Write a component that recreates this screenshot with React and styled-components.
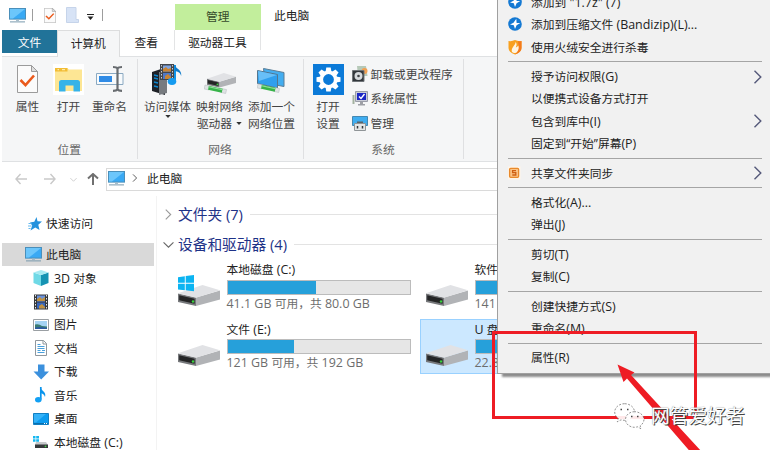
import * as React from 'react'
import styled, {createGlobalStyle, css} from 'styled-components';

const sideItems = [
    {icon : "cube", name : "3D 对象"},
    {icon : "video", name : "视频"},
    {icon : "picture", name : "图片"},
    {icon : "doc", name : "文档"},
    {icon : "download", name : "下载"},
    {icon : "music", name : "音乐"},
    {icon : "desktop", name : "桌面"},
    {icon : "disk", name : "本地磁盘 (C:)"},
];

const drives = [
    {name : "本地磁盘 (C:)", info : "41.1 GB 可用，共 80.0 GB", used : 48.6, system : true},
    {name : "软件 (D:)", info : "141 GB 可用，共 192 GB", used : 27},
    {name : "文件 (E:)", info : "121 GB 可用，共 192 GB", used : 36.7},
    {name : "U 盘 (F:)", info : "22.8 GB 可用，共 28.8 GB", used : 21, selected : true},
];

const menuGroups = [
    [
        {name : "添加到 \"1.7z\" (7)", icon : "bandizip"},
        {name : "添加到压缩文件 (Bandizip)(L)...", icon : "bandizip"},
        {name : "使用火绒安全进行杀毒", icon : "shield"},
    ],
    [
        {name : "授予访问权限(G)", more : true},
        {name : "以便携式设备方式打开"},
        {name : "包含到库中(I)", more : true},
        {name : "固定到“开始”屏幕(P)"},
    ],
    [{name : "共享文件夹同步", icon : "sync", more : true}],
    [{name : "格式化(A)..."}, {name : "弹出(J)"}],
    [{name : "剪切(T)"}, {name : "复制(C)"}],
    [{name : "创建快捷方式(S)"}, {name : "重命名(M)"}],
    [{name : "属性(R)"}],
];

// latin runs are set a little larger than the chinese text around them
const Label = ({text}) => text.split(/([ -~]+)/).map((part, i) => (
    i % 2 ? <Latin key={i}>{part}</Latin> : part
));

const Monitor = ({w, h}) => (
    <svg width={w} height={h} viewBox="0 0 17 15" preserveAspectRatio="none">
        <rect x="0.5" y="0.5" width="16" height="10.6" fill="#39a9f4" stroke="#4a8fba"/>
        <path d="M1 1h15L4 10.6H1z" fill="#6cc6fb"/>
        <path d="M7 11.5h3v1.4H7z" fill="#9fb6c4"/>
        <path d="M1 13.9h15" stroke="#7899ad" strokeWidth="1"/>
    </svg>
);

const CheckPage = ({w, h}) => (
    <svg width={w} height={h} viewBox="0 0 21 28" preserveAspectRatio="none">
        <path d="M0.5 0.5h14l6 6v21h-20z" fill="#fbfbfb" stroke="#9b9b9b"/>
        <path d="M14.5 0.5v6h6z" fill="#dedede" stroke="#9b9b9b"/>
        <path d="M3.5 15l5 5.2L17 10.5" fill="none" stroke="#ea5a1c" strokeWidth="2.6"/>
    </svg>
);

const OpenFolder = () => (
    <svg width="31" height="31" viewBox="0 0 31 31">
        <path d="M0 0h31v31H0z" fill="#fff"/>
        <path d="M2 4h12l2 1.5h13V27H2z" fill="#fde694"/>
        <path d="M2 4h12.5v3.500H2z" fill="#f2bd34"/>
        <path d="M4.500 5.700h1.500M9 5.700h3" stroke="#fff4c8"/>
        <path d="M6 18.500q0-2.500 2.500-2.500h16q2.500 0 2.500 2.500V27.500h-6.500v-6h-8v6H6z" fill="#36b3e8"/>
    </svg>
);

const Rename = () => (
    <svg width="28" height="28" viewBox="0 0 28 28">
        <path d="M0.500 8.500h26.500v11H0.500z" fill="#f7fafc" stroke="#8aa9c2"/>
        <path d="M3 11h13v6H3z" fill="#2f8be6"/>
        <path d="M17 2q3.500 0 4.500 1.500Q22.500 2 26 2M21.500 3v21.500M17 25.800q3.500 0 4.500-1.500 1 1.500 4.500 1.500" fill="none" stroke="#686c70" strokeWidth="2.200"/>
    </svg>
);

const MediaServer = () => (
    <svg width="31" height="31" viewBox="0 0 31 31">
        <path d="M0 8l9-3 4 2v24L0 27z" fill="#1d2127"/>
        <path d="M7 8h8v21l-8 2z" fill="#777b80"/>
        <path d="M2 11l4 1M2 14l4 1M2 18l4 1M2 22l4 1" stroke="#0c86cf" strokeWidth="1.300"/>
        <path d="M8 0h14v16H8z" fill="#42464c"/>
        <path d="M11 1.500h8v6h-8z" fill="#7ea4e0"/>
        <path d="M11 9h8v6h-8z" fill="#4e78c7"/>
        <path d="M11 5l3-2 2 2 3-1v3.500h-8zM13 12l3-2 3 3v2h-6z" fill="#c98432"/>
        <path d="M9.500 1v14M20.500 1v14" stroke="#c9cdd1" strokeDasharray="1.500 1.500"/>
        <path d="M23 1v15.500" stroke="#0f93e9" strokeWidth="2"/>
        <ellipse cx="20" cy="17.500" rx="4.300" ry="3.400" fill="#159bf0"/>
        <path d="M22.200 0c1 5 8 5 7 12-1-4-4-4.500-6-5z" fill="#0f7ccb"/>
    </svg>
);

const NetCable = ({x, y}) => (
    <g transform={`translate(${x} ${y}) rotate(12)`}>
        <path d="M0 0h5v4H0zM17 0h5v4h-5z" fill="#dfe3e4" stroke="#b4babd" strokeWidth="0.500"/>
        <path d="M4 0h14v4H4z" fill="#37b34a"/>
        <path d="M4 1h14" stroke="#8fe09b"/>
    </g>
);

const DriveBody = () => (
    <g>
        <path d="M18 12.500L42 5.500v9L18 21z" fill="#b1b3b6"/>
        <path d="M0 8.500L18 12.500V21L0 17z" fill="#77797c"/>
        <path d="M1.200 10.300l15.400 3.500v5L1.200 15.300z" fill="#242526"/>
        <path d="M0 8.300l24.500-8.300L42 5.300 18 12.800z" fill="#e1e2e5"/>
        <circle cx="15" cy="16.500" r="1.200" fill="#3bd13f"/>
    </g>
);

const WinLogo = () => (
    <path d="M0 2.200l6.800-1v6.600H0zM7.700 1L16 0v7.800H7.700zM0 8.700h6.800v6.600L0 14.400zM7.700 8.700H16v7.600l-8.300-1z" fill="#0bb4f2"/>
);

const NetDrive = () => (
    <svg width="32" height="22" viewBox="0 0 32 22">
        <g transform="translate(3 0) scale(0.690)"><DriveBody/></g>
        <NetCable x="1" y="12"/>
    </svg>
);

const NetPlace = () => (
    <svg width="29" height="26" viewBox="0 0 29 26">
        <path d="M6.500 0.500L27 4.500v14L8 15z" fill="#43adf0" stroke="#5a7d96"/>
        <path d="M0.500 2.500L20.500 6.500v13.500L0.500 15.500z" fill="#2f9fee" stroke="#54768e"/>
        <path d="M1 3l19 4L2 13z" fill="#68bff7"/>
        <NetCable x="1" y="16"/>
    </svg>
);

const gearTeeth = [0, 45, 90, 135, 180, 225, 270, 315];
const Gear = () => (
    <svg width="31" height="31" viewBox="0 0 31 31">
        <path d="M0 0h31v31H0z" fill="#0b7ad8"/>
        {gearTeeth.map((deg) => <path key={deg} d="M13.300 3.500h4.400l0.800 4.500h-6z" fill="#fff" transform={`rotate(${deg} 15.500 15.500)`}/>)}
        <circle cx="15.500" cy="15.500" r="7.200" fill="none" stroke="#fff" strokeWidth="3.600"/>
    </svg>
);

const Programs = () => (
    <svg width="16" height="16" viewBox="0 0 16 16">
        <path d="M5 0h9l1.500 10H6z" fill="#b6c9b8"/>
        <circle cx="12.500" cy="5" r="3" fill="#f2a052"/>
        <path d="M0.500 4.500h11.500v11H0.500z" fill="#32373b" stroke="#6f7478"/>
        <circle cx="6.500" cy="10" r="4" fill="#d5d9dc"/>
        <circle cx="6.500" cy="10" r="1.300" fill="#3c4043"/>
    </svg>
);

const SystemProps = () => (
    <svg width="16" height="15" viewBox="0 0 16 15">
        <path d="M0.500 4h2v9h-2z" fill="#a4b3a0"/>
        <path d="M3.500 0.500h12v10h-12z" fill="#c9ccd6" stroke="#9a9da8"/>
        <path d="M5 2h9v7H5z" fill="#1b26c4"/>
        <path d="M7 5.500l2 2 3.500-4.500" stroke="#fff" fill="none" strokeWidth="1.400"/>
        <path d="M8 11h3v2H8zM6 13h7v1.500H6z" fill="#9ea0a6"/>
    </svg>
);

const Manage = () => (
    <svg width="16" height="15" viewBox="0 0 16 15">
        <path d="M0.500 0.500h15v9h-15z" fill="#3fadf0" stroke="#4588b1"/>
        <path d="M5 5.500h6v2H5z" fill="#5d6266"/>
        <path d="M2.500 7.500h11v7h-11z" fill="#e4e6e7" stroke="#8f9497"/>
        <path d="M5.500 10v2.500M10.500 10v2.500" stroke="#33373a" strokeWidth="1.500"/>
    </svg>
);

const sideIcons = {
    cube : <g>
        <path d="M0.500 2.500L8 5v11L0.500 13z" fill="#6fd9e6"/>
        <path d="M8 5l7.500-2.500V13L8 16z" fill="#1593b3"/>
        <path d="M0.500 2.500L8 0l7.500 2.500L8 5z" fill="#a7eaf2"/>
    </g>,
    video : <g>
        <path d="M1 0.500h14v15H1z" fill="#36393c"/>
        <path d="M4 1.500h8v6H4z" fill="#6a92dc"/>
        <path d="M4 8.500h8v6H4z" fill="#3867bd"/>
        <path d="M4 5l3-2 2 2 3-2v4H4zM6 12l3-2 3 3v1.500H6z" fill="#c09241"/>
        <path d="M2.500 1v14M13.500 1v14" stroke="#e7e9ea" strokeDasharray="1.500 1.500"/>
    </g>,
    picture : <g>
        <path d="M0.500 2.500h15v11h-15z" fill="#fff" stroke="#9a9fa3"/>
        <path d="M2 4h12v8H2z" fill="#a4d3f3"/>
        <path d="M2 7.500q4-1 7 1.500l5 0.500V12H2z" fill="#3b7c72"/>
        <path d="M2 10.500q6-1 12 0.500v1H2z" fill="#2b5aa0"/>
    </g>,
    doc : <g>
        <path d="M2.500 0.500h8l3 3v12h-11z" fill="#fff" stroke="#8f979d"/>
        <path d="M4.500 4.500h3M4.500 6.500h7M4.500 8.500h7M4.500 10.500h3M4.500 12.500h7M9 10.500h3" stroke="#4aa0dc"/>
        <path d="M10 0.500v3.500h3.500" fill="none" stroke="#8f979d"/>
    </g>,
    download : <path d="M5 0.500h6.500v7H16L8.200 15.500 0.500 7.500H5z" fill="#3b90dd"/>,
    music : <g>
        <path d="M7.800 0v12.500" stroke="#0a94ec" strokeWidth="1.700"/>
        <ellipse cx="5.300" cy="12.800" rx="3.300" ry="2.700" fill="#12a0f4"/>
        <path d="M7.300 0c0.700 4 6.500 4.500 4.700 10C11.500 7.500 9.500 6.500 7.500 6z" fill="#0a94ec"/>
    </g>,
    desktop : <g>
        <path d="M0.500 2.500h15v11h-15z" fill="#0c9cf0" stroke="#127fc2"/>
        <path d="M1 3h12L3 11.500H1z" fill="#35b2f8"/>
        <path d="M1 12.500h14" stroke="#0a6fae"/>
        <path d="M11 12.500h1M13 12.500h1" stroke="#fff"/>
    </g>,
    disk : <g>
        <path d="M0 2h2.500v2.500H0zM3.200 2H6v2.500H3.200zM0 5.200h2.500v2.500H0zM3.200 5.200H6v2.500H3.200z" fill="#15b7f0"/>
        <path d="M3 8h10l2 3H2z" fill="#c6c9cb"/>
        <path d="M2 10.500h13V14H2z" fill="#36393b"/>
        <circle cx="12.500" cy="12.300" r="0.900" fill="#44d148"/>
    </g>,
};

const menuIcons = {
    bandizip : <g>
        <circle cx="7" cy="7" r="6.800" fill="#1479d3"/>
        <path d="M8.300 1.800L8.600 6h3.700L8.600 8.300 7 12 5.800 8.200 2 7.500 5.500 5.800z" fill="#fff"/>
    </g>,
    shield : <g>
        <path d="M0.500 1Q4 1.500 7 0q3 1.500 6.500 1v7q0 4-6.500 6.500Q0.500 12 0.500 8z" fill="#f8a01e"/>
        <path d="M10 1.200Q12 1.300 13.500 1v7q0 4-6.500 6.500 5-4 3-13.300z" fill="#f47a1c"/>
        <path d="M7.500 2c0.500 3-5 5.500-3.500 10 1.500 1.500 4 1.200 5 0 2-2 2-5 1.200-6.500Q9.500 7 7.800 7.500 9.500 4 7.500 2z" fill="#fff5e2"/>
    </g>,
    sync : <g>
        <path d="M0 0.500h12.500v13H0z" fill="#fff5e8"/>
        <rect x="1.600" y="2.300" width="9" height="9" rx="1" fill="#fbc487" stroke="#e8892b" strokeWidth="1.300"/>
        <path d="M8 4.700H4.600v2h3.200v2.300H4.300" fill="none" stroke="#cf5f12" strokeWidth="1.300"/>
    </g>,
};

const Chevron = ({size, color, dir}) => (
    <svg width={size} height={size} viewBox="0 0 10 10">
        <path d={dir === "down" ? "M0.500 3L5 7.500 9.500 3" : "M2.500 0.500L7 5 2.500 9.500"} fill="none" stroke={color} strokeWidth="1"/>
    </svg>
);

const Arrow = ({color, deg}) => (
    <svg width="12" height="12" viewBox="0 0 12 12">
        <path d="M12 6H1M5.500 1L1 6l4.500 5" fill="none" stroke={color} strokeWidth={deg === 90 ? 2 : 1.400} transform={`rotate(${deg} 6 6)`}/>
    </svg>
);

const Caret = () => <svg width="6" height="3" viewBox="0 0 6 3"><path d="M0.300 0h5.400L3 3z" fill="#333"/></svg>;

const Drive = ({name, info, used, system, selected}) => (
    <Tile $selected={selected}>
        <svg width="42" height="31" viewBox="0 0 42 31">
            <g transform="translate(0 10)"><DriveBody/></g>
            {system && <WinLogo/>}
        </svg>
        <div>
            <DriveName><Label text={name}/></DriveName>
            <Bar><BarFill style={{width : `${used}%`}}/></Bar>
            <DriveInfo><Label text={info}/></DriveInfo>
        </div>
    </Tile>
);

export default class App extends React.Component {
    renderRibbon() {
        return (
            <Ribbon>
                <Group $width={135.5}>
                    <Tools $pad={5}>
                        <Tool $width={41}><ToolIcon><CheckPage w={21} h={28}/></ToolIcon><p>属性</p></Tool>
                        <Tool $width={41}><ToolIcon><OpenFolder/></ToolIcon><p>打开</p></Tool>
                        <Tool $width={41}><ToolIcon><Rename/></ToolIcon><p>重命名</p></Tool>
                    </Tools>
                    <GroupName>位置</GroupName>
                </Group>
                <Group $width={166}>
                    <Tools $pad={4}>
                        <Tool $width={52}><ToolIcon><MediaServer/></ToolIcon><p>访问媒体</p><Caret/></Tool>
                        <Tool $width={52}><ToolIcon $top={10}><NetDrive/></ToolIcon><p>映射网络</p><p>驱动器<Caret/></p></Tool>
                        <Tool $width={52}><ToolIcon $top={5}><NetPlace/></ToolIcon><p>添加一个</p><p>网络位置</p></Tool>
                    </Tools>
                    <GroupName>网络</GroupName>
                </Group>
                <Group $width={160}>
                    <Tools $pad={4}>
                        <Tool $width={41}><ToolIcon><Gear/></ToolIcon><p>打开</p><p>设置</p></Tool>
                        <SmallTools>
                            <SmallTool><Programs/>卸载或更改程序</SmallTool>
                            <SmallTool><SystemProps/>系统属性</SmallTool>
                            <SmallTool><Manage/>管理</SmallTool>
                        </SmallTools>
                    </Tools>
                    <GroupName>系统</GroupName>
                </Group>
            </Ribbon>
        )
    }

    renderMenu() {
        return (
            <Menu>
                {menuGroups.map((group, i) => (
                    <MenuGroup key={i}>
                        {group.map((item) => (
                            <MenuItem key={item.name}>
                                <MenuIcon>{item.icon && <svg width="14" height="15" viewBox="0 0 14 15">{menuIcons[item.icon]}</svg>}</MenuIcon>
                                <MenuText><Label text={item.name}/></MenuText>
                                {item.more && <Chevron size={14} color="#55597a"/>}
                            </MenuItem>
                        ))}
                    </MenuGroup>
                ))}
            </Menu>
        )
    }

    render() {
        return (
            <Page>
                <GlobalStyle/>
                <TitleBar>
                    <QuickAccess>
                        <Monitor w={17} h={15}/>
                        <Divider $left={6}/>
                        <QuickPage><CheckPage w={12} h={15}/></QuickPage>
                        <svg width="13" height="16" viewBox="0 0 13 16"><path d="M0.500 0.500h9.500v12h2.500v3h-12z" fill="#d7e3f6" stroke="#c6d4ea"/></svg>
                        <QuickMore><svg width="7" height="6" viewBox="0 0 7 6"><path d="M0 0.500h7" stroke="#222"/><path d="M0.500 2.500h6L3.500 6z" fill="#222"/></svg></QuickMore>
                        <Divider $left={8}/>
                    </QuickAccess>
                    <ContextTitle>管理</ContextTitle>
                    <WindowTitle>此电脑</WindowTitle>
                </TitleBar>
                <TabRow>
                    <FileTab>文件</FileTab>
                    <ActiveTab>计算机</ActiveTab>
                    <Tab $width={53.5}>查看</Tab>
                    <ContextTab>驱动器工具</ContextTab>
                </TabRow>
                {this.renderRibbon()}
                <AddressRow>
                    <Arrow color="#c9c9c9" deg={0}/>
                    <Arrow color="#c9c9c9" deg={180}/>
                    <Chevron size={7} color="#bdbdbd" dir="down"/>
                    <Arrow color="#707070" deg={90}/>
                    <AddressBox>
                        <Monitor w={17} h={15}/>
                        <Chevron size={8} color="#333"/>
                        <span>此电脑</span>
                    </AddressBox>
                </AddressRow>
                <Body>
                    <Sidebar>
                        <QuickRow>
                            <svg width="14" height="14" viewBox="0 0 14 14">
                                <path d="M8.500 0l1 4.200 4.500 0.300-3.700 3.200 1.200 5.300-4.200-2.500L2.500 13.500l1.700-5L2 5.500l4.300-0.700z" fill="#2492dd"/>
                                <path d="M0.500 6.500h3M0 9h3.500M0.500 11.500h2" stroke="#65b9ee"/>
                            </svg>
                            快速访问
                        </QuickRow>
                        <PcRow><Monitor w={17} h={15}/>此电脑</PcRow>
                        {sideItems.map((item) => (
                            <SideRow key={item.name}>
                                <svg width="16" height="16" viewBox="0 0 16 16">{sideIcons[item.icon]}</svg>
                                <span><Label text={item.name}/></span>
                            </SideRow>
                        ))}
                    </Sidebar>
                    <Content>
                        <Section><Chevron size={11} color="#9a9a9a"/>文件夹 (7)<Line/></Section>
                        <Section><Chevron size={11} color="#666" dir="down"/>设备和驱动器 (4)<Line/></Section>
                        <Tiles>
                            {drives.map((drive) => <Drive key={drive.name} {...drive}/>)}
                        </Tiles>
                    </Content>
                </Body>
                {this.renderMenu()}
                <RedBox/>
                <RedArrow width="100" height="90" viewBox="0 0 100 90">
                    <path d="M0.500 0.500L17.500 8.500l-3.500 2.500L85 88H73.500L10 14.500 6.500 18z" fill="#ee1c24"/>
                </RedArrow>
                <Watermark>
                    <svg width="31" height="27" viewBox="0 0 31 27">
                        <g fill="#fff" fillOpacity="0.900" stroke="#666" strokeWidth="0.700" strokeDasharray="2 1.500">
                            <path d="M10.500 0.700C5 0.700 0.700 4.500 0.700 9c0 2.700 1.300 4.800 3.600 6.300l-1 3.500 3.800-2c1.200 0.300 2.200 0.500 3.400 0.500 5.500 0 10-3.600 10-8.300S16 0.700 10.500 0.700z"/>
                            <path d="M20.500 8.700c-5 0-9 3.500-9 7.800s4 7.800 9 7.800c1 0 2-0.200 3-0.500l3.500 2-0.800-3c2-1.500 3.800-3.700 3.800-6.300 0-4.300-4.500-7.800-9.500-7.800z"/>
                        </g>
                        <path d="M6.500 6.500h1.500M13 6.500h1.500M17 13.500h1.500M23 13.500h1.500" stroke="#444" strokeWidth="1.500"/>
                    </svg>
                    <span>网管爱好者</span>
                </Watermark>
            </Page>
        )
    }
}

const GlobalStyle = createGlobalStyle`
    body {
        margin: 0;
        overflow: hidden;
        background: #fff;
    }
    * {
        box-sizing: border-box;
    }
    svg {
        flex: none;
        display: block;
    }
`

const center = css`
    display: flex;
    align-items: center;
    justify-content: center;
`

const Page = styled.div`
    position: relative;
    width: 770px;
    height: 450px;
    overflow: hidden;
    background: #fff;
    color: #222;
    font-family: "Open Sans", "Noto Sans CJK SC", sans-serif;
    font-size: 11.75px;
    line-height: 17px;
    white-space: nowrap;
    p {
        margin: 0;
    }
`

const Latin = styled.span`
    font-size: 1.060em;
    line-height: 1;
    white-space: pre;
`

const TitleBar = styled.div`
    display: flex;
    height: 30px;
`

const QuickAccess = styled.div`
    display: flex;
    align-items: center;
    width: 174.5px;
    padding-left: 9px;
`

const Divider = styled.div`
    width: 1px;
    height: 12px;
    margin-left: ${props => props.$left}px;
    background: #9d9d9d;
`

const QuickPage = styled.div`
    margin: 0 10px 0 11px;
`

const QuickMore = styled.div`
    margin: 3px 0 0 8px;
`

const ContextTitle = styled.div`
    ${center}
    width: 86.500px;
    margin-top: 4px;
    padding-bottom: 1px;
    background: #c2ee9c;
    color: #354a2b;
`

const WindowTitle = styled.div`
    padding: 7px 0 0 13px;
`

const TabRow = styled.div`
    display: flex;
    height: 26px;
    padding-left: 2px;
`

const Tab = styled.div`
    ${center}
    width: ${props => props.$width}px;
    height: 26px;
    padding-bottom: 1px;
`

const FileTab = styled(Tab)`
    width: 55px;
    height: 23px;
    padding: 1px 0 0;
    background: #217399;
    color: #fff;
`

const ActiveTab = styled(Tab)`
    position: relative;
    z-index: 1;
    width: 62.500px;
    height: 27px;
    padding-bottom: 2px;
    background: #f5f6f7;
    border: 1px solid #dcddde;
    border-bottom: 0;
`

const ContextTab = styled(Tab)`
    width: 87px;
    height: 20px;
    margin-left: 1px;
    padding: 5px 0 0;
    border: solid #e3e4e5;
    border-width: 0 1px;
`

const Ribbon = styled.div`
    display: flex;
    height: 106px;
    margin-left: 2px;
    padding: 2px 0;
    background: #f5f6f7;
    border: solid #dfe1e3;
    border-width: 1px 0;
    color: #444;
`

const Group = styled.div`
    display: flex;
    flex-direction: column;
    width: ${props => props.$width}px;
    border-right: 1px solid #dfe0e2;
`

const Tools = styled.div`
    display: flex;
    height: 82px;
    padding: 4px 0 0 ${props => props.$pad}px;
`

const Tool = styled.div`
    display: flex;
    flex-direction: column;
    align-items: center;
    width: ${props => props.$width}px;
    p {
        display: flex;
        align-items: center;
        gap: 4px;
    }
`

const ToolIcon = styled.div`
    display: flex;
    flex: none;
    align-items: ${props => props.$top ? "flex-start" : "center"};
    height: 35px;
    padding: ${props => props.$top ? props.$top : 0}px 0 ${props => props.$top ? 0 : 3}px;
`

const SmallTools = styled.div`
    display: flex;
    flex-direction: column;
    padding: 0 0 0 3px;
    margin-top: -1px;
`

const SmallTool = styled.div`
    display: flex;
    align-items: center;
    gap: 3px;
    height: 24.500px;
`

const GroupName = styled.div`
    text-align: center;
    color: #666;
`

const AddressRow = styled.div`
    display: flex;
    align-items: center;
    height: 34px;
    padding-left: 15px;
    > svg:nth-child(1) {
        margin-right: 17px;
    }
    > svg:nth-child(2) {
        margin-right: 14px;
    }
    > svg:nth-child(3) {
        margin-right: 10px;
    }
    > svg:nth-child(4) {
        margin-right: 7px;
    }
`

const AddressBox = styled.div`
    display: flex;
    flex: 1;
    align-items: center;
    height: 23px;
    padding: 0 0 2px 1px;
    border: 1px solid #dadada;
    svg + svg {
        margin: 0 8px 0 6px;
    }
`

const Body = styled.div`
    display: flex;
    height: 254px;
`

const Sidebar = styled.div`
    width: 157px;
    padding: 16px 2px 0 2px;
    border-right: 1px solid #f3f3f3;
`

const SideRow = styled.div`
    display: flex;
    align-items: center;
    gap: 5px;
    height: 23.450px;
    padding-left: 31px;
`

const QuickRow = styled(SideRow)`
    padding-left: 26px;
    gap: 4px;
    margin-bottom: 7.500px;
`

const PcRow = styled(SideRow)`
    padding-left: 23px;
    gap: 4px;
    background: #d9d9d9;
`

const Content = styled.div`
    flex: 1;
`

const Section = styled.div`
    display: flex;
    align-items: center;
    height: 29.500px;
    padding-left: 6px;
    color: #1e3287;
    font-size: 14.700px;
    &:first-child {
        margin-top: 4px;
    }
    svg {
        margin-right: 4px;
    }
`

const Line = styled.div`
    flex: 1;
    height: 1px;
    margin-left: 7px;
    background: #e3e3e3;
`

const Tiles = styled.div`
    display: grid;
    grid-template-columns: 244px 244px;
    gap: 4px;
    padding-left: 15px;
`

const Tile = styled.div`
    display: flex;
    height: 55.500px;
    padding-left: 5px;
    border: 1px solid ${props => props.$selected ? "#99d1ff" : "transparent"};
    background: ${props => props.$selected ? "#cce8ff" : "transparent"};
    > svg {
        margin: 15px 6.500px 0 0;
    }
`

const DriveName = styled.div`
    height: 19.500px;
    padding-top: 1px;
`

const Bar = styled.div`
    width: 184.500px;
    height: 15px;
    border: 1px solid #bcbcbc;
    background: #e6e6e6;
`

const BarFill = styled.div`
    height: 100%;
    background: #26a0da;
`

const DriveInfo = styled.div`
    color: #6d6d6d;
`

const Menu = styled.div`
    position: absolute;
    left: 497px;
    bottom: 76px;
    width: 280px;
    padding-bottom: 4px;
    background: #f1f1f1;
    border: 1px solid #a0a0a0;
    box-shadow: 5px 3px 2px rgba(0, 0, 0, 0.45);
`

const MenuGroup = styled.div`
    & + & {
        margin-top: 3px;
        padding-top: 3px;
    }
    & + &::before {
        content: "";
        display: block;
        width: 254px;
        height: 1px;
        margin: 0 0 0 10px;
        background: #a5a5a5;
        transform: translateY(-3px);
    }
`

const MenuItem = styled.div`
    display: flex;
    align-items: center;
    height: 22.400px;
    padding-left: 10px;
`

const MenuText = styled.div`
    flex: none;
    width: 220px;
`

const MenuIcon = styled.div`
    width: 23px;
`

const RedBox = styled.div`
    position: absolute;
    left: 492px;
    top: 331px;
    width: 205px;
    height: 88px;
    border: 3px solid #ee1c24;
`

const RedArrow = styled.svg`
    position: absolute;
    left: 617px;
    top: 364px;
`

const Watermark = styled.div`
    position: absolute;
    left: 614px;
    top: 402px;
    display: flex;
    align-items: center;
    gap: 6px;
    color: #fff;
    font-size: 18.800px;
    line-height: 28px;
    text-shadow: 1px 1px 0 #444, 0 0 1px #777;
`
